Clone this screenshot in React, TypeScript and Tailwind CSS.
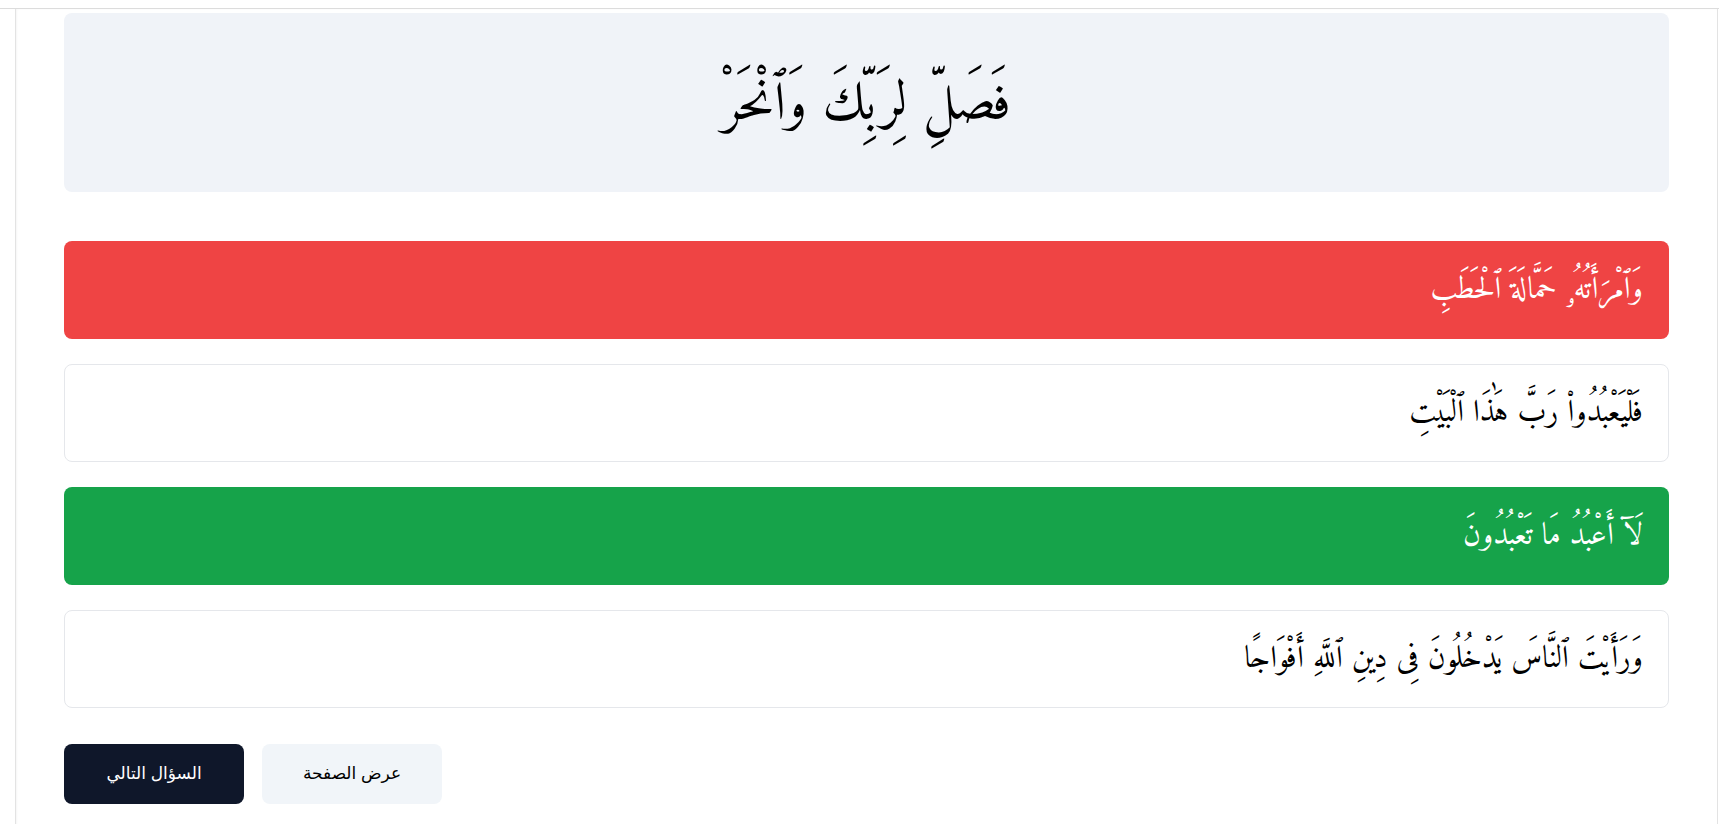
import React from "react";

const arabic = { fontFamily: '"Amiri", "Noto Naskh Arabic", "Scheherazade New", "Traditional Arabic", "DejaVu Serif", serif' } as React.CSSProperties;

const options: { text: string; kind: "wrong" | "neutral" | "right" }[] = [
  { text: "وَٱمْرَأَتُهُۥ حَمَّالَةَ ٱلْحَطَبِ", kind: "wrong" },
  { text: "فَلْيَعْبُدُوا۟ رَبَّ هَٰذَا ٱلْبَيْتِ", kind: "neutral" },
  { text: "لَآ أَعْبُدُ مَا تَعْبُدُونَ", kind: "right" },
  { text: "وَرَأَيْتَ ٱلنَّاسَ يَدْخُلُونَ فِى دِينِ ٱللَّهِ أَفْوَاجًا", kind: "neutral" },
];

export default function App() {
  return (
    <div className="h-screen overflow-hidden bg-white">
      <div className="h-[9px] border-b border-[#dcdcdc]" />
      <div className="ml-[15px] mr-[1px] h-full border-x border-[#e3e3e3] px-12 pt-1 shadow-[inset_1px_0_2px_rgba(0,0,0,0.04)]">
        <div className="flex h-[179px] items-center justify-center rounded-lg bg-[#f0f3f8]">
          <p dir="rtl" className="mt-[8px] text-[53px] leading-none text-black" style={arabic}>
            فَصَلِّ لِرَبِّكَ وَٱنْحَرْ
          </p>
        </div>
        <div className="mt-[49px] flex flex-col gap-[25px]">
          {options.map((o, i) => (
            <div
              key={i}
              dir="rtl"
              className={
                o.kind === "wrong"
                  ? "flex h-[98px] items-center rounded-lg bg-[#ef4444] px-[26px] text-white"
                  : o.kind === "right"
                  ? "flex h-[98px] items-center rounded-lg bg-[#16a34a] px-[26px] text-white"
                  : "flex h-[98px] items-center rounded-lg border border-[#e5e7eb] bg-white px-[25px] text-black"
              }
            >
              <span className="text-[31px] leading-none" style={arabic}>{o.text}</span>
            </div>
          ))}
        </div>
        <div className="mt-[36px] flex gap-[18px]">
          <button
            dir="rtl"
            className="flex h-[60px] w-[180px] items-center justify-center rounded-lg bg-[#0f172a] text-[17px] font-medium text-white"
            style={{ fontFamily: '"Liberation Sans", "DejaVu Sans", sans-serif' }}
          >
            السؤال التالي
          </button>
          <button
            dir="rtl"
            className="flex h-[60px] w-[180px] items-center justify-center rounded-lg bg-[#f1f5f9] text-[17px] text-black"
            style={{ fontFamily: '"Liberation Sans", "DejaVu Sans", sans-serif' }}
          >
            عرض الصفحة
          </button>
        </div>
      </div>
    </div>
  );
}
